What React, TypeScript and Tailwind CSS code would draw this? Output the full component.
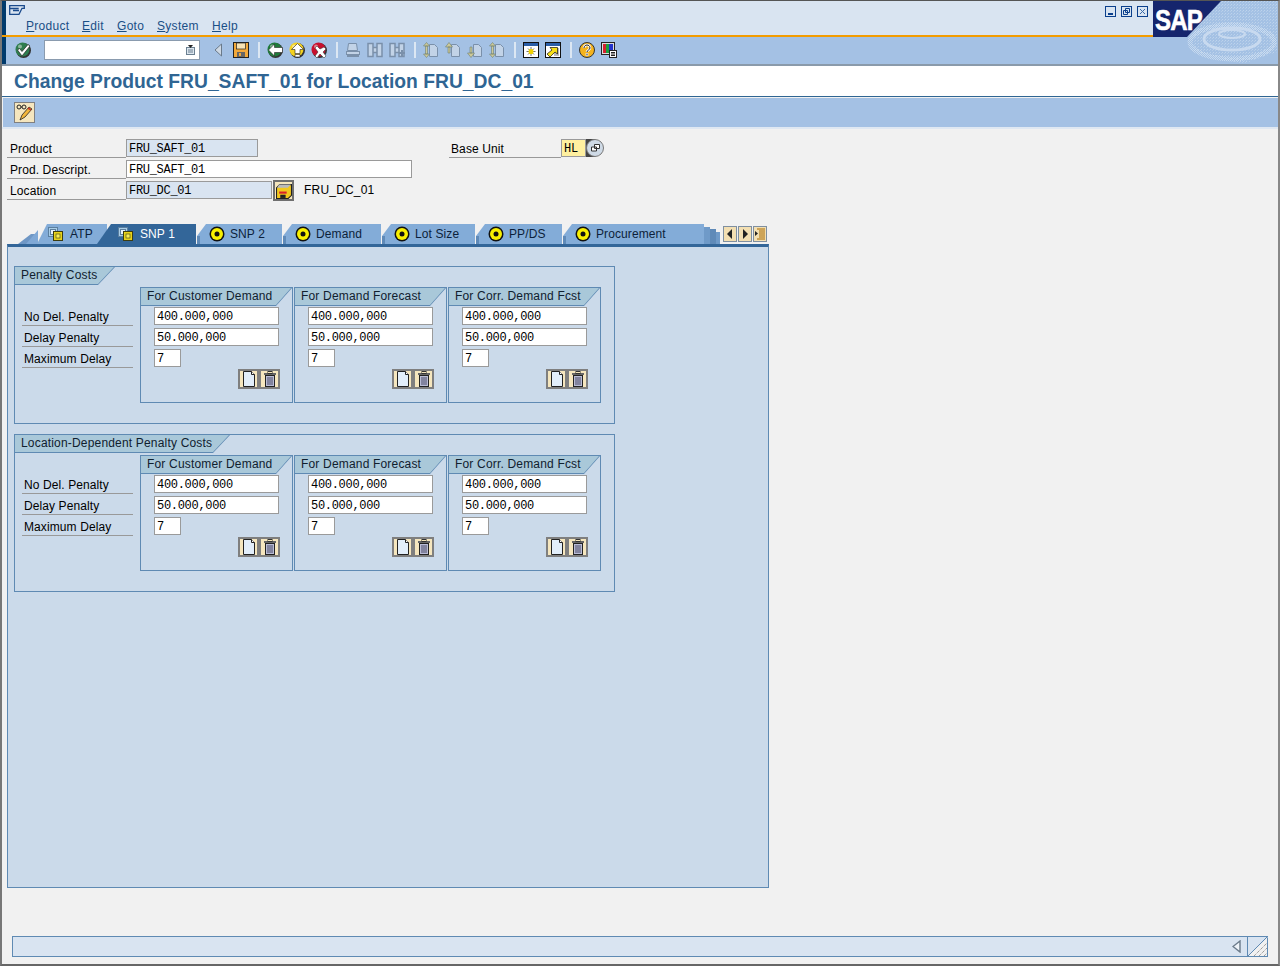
import React from "react";

const sans = "font-['Liberation_Sans',Arial,sans-serif]";
const mono = "font-['Liberation_Mono','Courier_New',monospace]";

const Round = ({ fill, children }: { fill: string; children: React.ReactNode }) => (
  <svg width="16" height="16" viewBox="0 0 16 16" className="shrink-0">
    <circle cx="8.5" cy="8.5" r="7.5" fill="#333" />
    <circle cx="7.5" cy="7.5" r="7" fill={fill} />
    <circle cx="5" cy="4.5" r="2" fill="#fff" opacity="0.45" />
    {children}
  </svg>
);

const EnterIcon = () => (
  <Round fill="#2f7d4f">
    <path d="M2.5 8l2-1.5 2.5 3 6-7 2 1.5-8 10z" fill="#fff" stroke="#222" strokeWidth="0.7" />
  </Round>
);
const BackIcon = () => (
  <Round fill="#1f7a3a">
    <path d="M1.5 8l6-6v3.5h8v5h-8V14z" fill="#fff" stroke="#222" strokeWidth="0.6" />
  </Round>
);
const ExitIcon = () => (
  <Round fill="#f4d21f">
    <path d="M8.5 1.5l6 6h-3.5v4H6v-4H2.5zM6 12.5h5v2.5H6z" fill="#fff" stroke="#222" strokeWidth="0.6" />
  </Round>
);
const CancelIcon = () => (
  <Round fill="#c8102e">
    <path d="M4 6l2-2 3 3 4-2 2 2-3 3 3 4-2 2-4-4-3 4-2-2 3-4z" fill="#fff" stroke="#222" strokeWidth="0.5" />
  </Round>
);
const SaveIcon = () => (
  <svg width="16" height="16" viewBox="0 0 16 16" className="shrink-0">
    <rect x="0.5" y="0.5" width="15" height="15" fill="#f2a93b" stroke="#222" />
    <rect x="3.5" y="1" width="9" height="6" fill="#f7e3b5" stroke="#222" strokeWidth="0.7" />
    <rect x="4" y="10" width="8" height="5" fill="#666" />
    <rect x="6" y="11" width="2" height="3" fill="#f2a93b" />
  </svg>
);
const GreyIcon = ({ kind }: { kind: string }) => {
  const c = "#7a90aa";
  const f = "#c2d3e7";
  if (kind === "print")
    return (
      <svg width="16" height="16" viewBox="0 0 16 16" className="shrink-0">
        <path d="M3.5 1.5h8l1 7h-10z" fill={f} stroke={c} />
        <rect x="1.5" y="9.5" width="13" height="3" fill={f} stroke={c} />
        <rect x="2" y="13" width="12" height="2" fill={c} />
      </svg>
    );
  if (kind === "find" || kind === "findn")
    return (
      <svg width="16" height="16" viewBox="0 0 16 16" className="shrink-0">
        <path d="M1 1.5h5v13H1zM10 1.5h5v13h-5zM6 5.5h4v5H6z" fill={f} stroke={c} strokeWidth="1.5" />
        {kind === "findn" && <path d="M10 10h2V8h2v2h2v2h-2v2h-2v-2h-2z" fill={c} />}
      </svg>
    );
  const up = kind === "first" || kind === "prev";
  const both = kind === "first" || kind === "last";
  return (
    <svg width="16" height="16" viewBox="0 0 16 16" className="shrink-0">
      <path d="M6.5 2.5h5l3 3v9h-8z" fill={f} stroke={c} />
      {both ? (
        <path d="M3.5 0.5L0.5 4h6zM3.5 15.5l3-3.5h-6zM2.5 4h2v8h-2z" fill="#cdc998" stroke="#6f7f70" strokeWidth="0.6" />
      ) : up ? (
        <path d="M4 0.5L0.5 5h7zM3 5h2v6H3z" fill="#cdc998" stroke="#6f7f70" strokeWidth="0.6" />
      ) : (
        <path d="M4 15.5L0.5 11h7zM3 5h2v6H3z" fill="#cdc998" stroke="#6f7f70" strokeWidth="0.6" />
      )}
    </svg>
  );
};
const NewSessionIcon = () => (
  <svg width="16" height="16" viewBox="0 0 16 16" className="shrink-0">
    <rect x="0.5" y="0.5" width="15" height="15" fill="#fff" stroke="#111" />
    <rect x="1" y="1" width="14" height="3" fill="#2a5ea8" />
    <path d="M8 5v9M3.5 9.5h9M5 6.5l6 6M11 6.5l-6 6" stroke="#333" strokeWidth="0.7" />
    <path d="M5.5 9.5h5M8 7v5M6 7.5l4 4M10 7.5l-4 4" stroke="#f2d200" strokeWidth="1.4" />
  </svg>
);
const ShortcutIcon = () => (
  <svg width="16" height="16" viewBox="0 0 16 16" className="shrink-0">
    <rect x="0.5" y="0.5" width="15" height="15" fill="#fff" stroke="#111" />
    <rect x="1" y="1" width="14" height="3" fill="#2a5ea8" />
    <rect x="9" y="6" width="5" height="8" fill="#bbb" />
    <path d="M2 12l5-4-2-2.5h7.5V12L10 10l-5 5z" fill="#f7e01a" stroke="#111" strokeWidth="0.7" />
  </svg>
);
const HelpIcon = () => (
  <svg width="16" height="16" viewBox="0 0 16 16" className="shrink-0">
    <circle cx="8" cy="8" r="7.5" fill="#f4b31d" stroke="#333" />
    <path d="M5 6c0-4 6-4 6 0 0 2-3 2-3 4M8 11v3" fill="none" stroke="#fff" strokeWidth="2.6" />
    <path d="M5 6c0-4 6-4 6 0 0 2-3 2-3 4M8 11.5v2" fill="none" stroke="#222" strokeWidth="1" />
  </svg>
);
const LayoutIcon = () => (
  <svg width="16" height="16" viewBox="0 0 16 16" className="shrink-0">
    <rect x="0.5" y="0.5" width="13" height="12" fill="#ddd" stroke="#222" />
    <rect x="2" y="2" width="3" height="9" fill="#d2202f" />
    <rect x="5" y="2" width="3" height="9" fill="#19a03c" />
    <rect x="8" y="2" width="4" height="9" fill="#2233cc" />
    <rect x="8.5" y="8.5" width="7" height="7" fill="#fff" stroke="#222" />
    <path d="M10 10.5h4M10 12h4M10 13.5h4" stroke="#222" />
  </svg>
);

const Sep = () => <div className="w-[2px] h-[16px] bg-[#dce7f3] ml-[9px] mr-[7px] shrink-0" />;

const WinBtn = ({ children }: { children: React.ReactNode }) => (
  <svg width="11" height="11" viewBox="0 0 11 11" className="shrink-0">
    <rect x="0.5" y="0.5" width="10" height="10" fill="none" stroke="#0b3f8c" />
    {children}
  </svg>
);

const SapLogo = () => (
  <div className="absolute left-[1151px] top-0 w-[127px] h-[63px] overflow-hidden">
    <svg width="127" height="63" viewBox="0 0 127 63" className="absolute left-0 top-0">
      <defs>
        <pattern id="dots" width="3" height="3" patternUnits="userSpaceOnUse">
          <rect x="0" y="0" width="1" height="1" fill="#d6e4f4" />
          <rect x="2" y="1" width="1" height="1" fill="#c5d8ee" />
        </pattern>
        <pattern id="dots2" width="2" height="2" patternUnits="userSpaceOnUse">
          <rect x="0" y="0" width="1" height="1" fill="#dfeaf6" />
          <rect x="1" y="1" width="1" height="1" fill="#dfeaf6" />
        </pattern>
      </defs>
      <rect x="34" y="0" width="93" height="63" fill="#a4c1e4" />
      <polygon points="68,0 127,0 127,50 90,63 40,50 40,30" fill="url(#dots)" opacity="0.5" />
      <ellipse cx="79" cy="41" rx="42" ry="17" fill="none" stroke="url(#dots2)" strokeWidth="5" opacity="0.6" />
      <ellipse cx="79" cy="38" rx="28" ry="11" fill="none" stroke="#cfdff1" strokeWidth="3" opacity="0.8" />
      <ellipse cx="79" cy="33" rx="13" ry="4" fill="none" stroke="#cfdff1" strokeWidth="2" opacity="0.8" />
      <polygon points="0,0 68,0 34,36 0,36" fill="#15256d" />
    </svg>
    <div className={`absolute left-[2px] top-[3px] origin-left scale-x-[0.8] text-[30px] leading-[32px] font-bold tracking-[-1px] text-white [-webkit-text-stroke:0.6px_white] ${sans}`}>
      SAP
    </div>
  </div>
);

const menuItems = [
  { first: "P", rest: "roduct", w: "w-[56px]" },
  { first: "E", rest: "dit", w: "w-[35px]" },
  { first: "G", rest: "oto", w: "w-[40px]" },
  { first: "S", rest: "ystem", w: "w-[55px]" },
  { first: "H", rest: "elp", w: "w-[40px]" },
];

const Field = ({ value, w, tone = "white" }: { value: string; w: string; tone?: "white" | "blue" | "yellow" }) => {
  const bg = tone === "white" ? "bg-white" : tone === "blue" ? "bg-[#d9e4f1]" : "bg-[#fff0a0]";
  return (
    <div className={`${w} h-[18px] shrink-0 border border-[#9a9a9a] ${bg} pl-[2px] text-[12px] leading-[19px] tracking-[-0.3px] text-black overflow-hidden ${mono}`}>
      {value}
    </div>
  );
};

const Label = ({ text, w, pl = "pl-[3px]" }: { text: string; w: string; pl?: string }) => (
  <div className={`${w} h-[19px] shrink-0 border-b border-[#999] ${pl} text-[12px] leading-[21px] tracking-[0.1px] text-black ${sans}`}>
    {text}
  </div>
);

const RadioIcon = () => (
  <svg width="16" height="16" viewBox="0 0 16 16" className="shrink-0">
    <circle cx="8" cy="8" r="7.5" fill="#111" />
    <circle cx="8" cy="8" r="6" fill="#f8f000" />
    <circle cx="8" cy="8" r="2.5" fill="#111" />
  </svg>
);
const PagesIcon = () => (
  <svg width="15" height="14" viewBox="0 0 15 14" className="shrink-0">
    <rect x="0.5" y="0.5" width="9" height="9" fill="#a8cde8" stroke="#5b7f9f" />
    <rect x="2.5" y="2.5" width="5" height="5" fill="#e4f0fa" stroke="#5b7f9f" />
    <rect x="5.5" y="4.5" width="9" height="9" fill="#e7d31a" stroke="#3c3c10" />
    <rect x="8" y="7" width="4" height="4" fill="#f9ef55" stroke="#3c3c10" strokeWidth="0.6" />
  </svg>
);

const tabs = [
  { text: "SNP 2", w: "w-[85px]" },
  { text: "Demand", w: "w-[98px]" },
  { text: "Lot Size", w: "w-[93px]" },
  { text: "PP/DS", w: "w-[86px]" },
  { text: "Procurement", w: "w-[141px]" },
];

const TabStrip = () => (
  <div className="flex items-end h-[20px] w-[762px]">
    <svg width="20" height="20" viewBox="0 0 20 20" className="shrink-0 ml-[11px]">
      <polygon points="0,20 13,10 18,10 10,20" fill="#6f97c5" />
      <polygon points="8,20 20,6 20,20" fill="#7fa8d6" />
    </svg>
    <div className={`w-[70px] h-[20px] shrink-0 -ml-[1px] bg-[#83acd8] [clip-path:polygon(0_100%,10px_0,100%_0,100%_100%)] flex items-center pl-[11px] gap-[7px] text-[12px] tracking-[0.1px] text-[#0c1f3a] ${sans}`}>
      <PagesIcon />
      ATP
    </div>
    <div className={`w-[99px] h-[20px] shrink-0 -ml-[10px] bg-[#336699] [clip-path:polygon(0_100%,14px_0,100%_0,100%_100%)] flex items-center pl-[21px] gap-[7px] text-[12px] tracking-[0.1px] text-white ${sans}`}>
      <PagesIcon />
      SNP 1
    </div>
    {tabs.map((t) => (
      <div
        key={t.text}
        className={`${t.w} h-[20px] shrink-0 ml-[1px] relative bg-[#83acd8] [clip-path:polygon(0_100%,0_12px,9px_0,100%_0,100%_100%)] flex items-center pl-[12px] gap-[5px] text-[12px] tracking-[0.1px] text-[#0c1f3a] ${sans}`}
      >
        <span className="absolute left-0 bottom-0 w-[3px] h-[8px] bg-[#5f8ab8]" />
        <RadioIcon />
        {t.text}
      </div>
    ))}
    <div className="flex items-end shrink-0 ml-0">
      <div className="w-[6px] h-[17px] bg-[#6f9ac8]" />
      <div className="w-[6px] h-[15px] bg-[#5f8ab8]" />
      <div className="w-[4px] h-[12px] bg-[#6f9ac8]" />
    </div>
    <div className="flex gap-[1px] ml-[3px] mb-[2px] shrink-0">
      {[0, 1, 2].map((i) => (
        <div key={i} className="w-[14px] h-[16px] border border-[#7f8fa0] bg-[#f3dfb2] flex items-center justify-center">
          <svg width="12" height="12" viewBox="0 0 12 12">
            {i === 0 && <polygon points="8,1 3,6 8,11" fill="#222" />}
            {i === 1 && <polygon points="4,1 9,6 4,11" fill="#222" />}
            {i === 2 && (
              <g>
                <path d="M3 1h8M5 3h6M5 5h6M5 7h6M5 9h6M3 11h8" stroke="#a86a00" />
                <polygon points="1,3 4,5.5 1,8" fill="#222" />
              </g>
            )}
          </svg>
        </div>
      ))}
    </div>
  </div>
);

const HeadTab = ({ text, w, slant, h }: { text: string; w: string; slant: string; h: string }) => (
  <div className={`${w} ${h} relative bg-[#5f8ab3] ${slant}`}>
    <div className={`absolute left-0 right-[1px] top-0 bottom-[1px] bg-[#a9c8d9] ${slant} pl-[6px] text-[12px] leading-[16px] tracking-[0.18px] text-[#10202e] whitespace-nowrap ${sans}`}>
      {text}
    </div>
  </div>
);

const FileIcon = () => (
  <svg width="14" height="16" viewBox="0 0 14 16">
    <path d="M1.5 0.5h8l3 3v12h-11z" fill="#e2eefa" stroke="#222" />
    <path d="M9.5 0.5v3h3" fill="#fff" stroke="#222" />
  </svg>
);
const TrashIcon = () => (
  <svg width="14" height="16" viewBox="0 0 14 16">
    <rect x="1" y="2" width="12" height="2" fill="#666" />
    <rect x="5" y="0.5" width="4" height="2" fill="none" stroke="#333" />
    <rect x="2.5" y="4.5" width="9" height="11" fill="#b9bcd6" stroke="#222" />
    <path d="M5 6v8M7 6v8M9 6v8" stroke="#4a4a66" />
  </svg>
);

const IconBtn = ({ children }: { children: React.ReactNode }) => (
  <div className="w-[21px] h-[20px] border-2 border-[#7f7f7f] bg-[#f5e6be] flex items-center justify-center shrink-0">
    {children}
  </div>
);

const SubGroup = ({ title }: { title: string }) => (
  <div className="w-[153px] h-[116px] shrink-0 border border-[#5f8ab3] flex flex-col">
    <HeadTab text={title} w="w-[151px]" h="h-[18px]" slant="[clip-path:polygon(0_0,100%_0,135px_100%,0_100%)]" />
    <div className="flex flex-col gap-[3px] pl-[13px] pt-[1px]">
      <Field value="400.000,000" w="w-[125px]" />
      <Field value="50.000,000" w="w-[125px]" />
      <Field value="7" w="w-[27px]" />
    </div>
    <div className="flex justify-end pr-[12px] mt-[2px]">
      <IconBtn>
        <FileIcon />
      </IconBtn>
      <IconBtn>
        <TrashIcon />
      </IconBtn>
    </div>
  </div>
);

const PenaltyGroup = ({ title, headW, slant }: { title: string; headW: string; slant: string }) => (
  <div className="w-[601px] h-[158px] border border-[#5f8ab3]">
    <HeadTab text={title} w={headW} h="h-[18px]" slant={slant} />
    <div className="flex mt-[2px] pl-[7px]">
      <div className="w-[111px] mr-[7px] pt-[20px] flex flex-col gap-[2px] shrink-0">
        {["No Del. Penalty", "Delay Penalty", "Maximum Delay"].map((l) => (
          <Label key={l} text={l} w="w-[111px]" pl="pl-[2px]" />
        ))}
      </div>
      <div className="flex gap-[1px]">
        <SubGroup title="For Customer Demand" />
        <SubGroup title="For Demand Forecast" />
        <SubGroup title="For Corr. Demand Fcst" />
      </div>
    </div>
  </div>
);

export default function App() {
  return (
    <div className="relative w-[1280px] h-[966px] overflow-hidden bg-[#f1f1f1] flex flex-col border-l-2 border-t border-r-2 border-b-2 border-l-[#777] border-t-[#555] border-r-[#888] border-b-[#666]">
      {/* title bar */}
      <div className="h-[36px] shrink-0 flex bg-[#d9e4f1] border-b-2 border-[#f39c00]">
        <div className="w-[4px] bg-[#003a6c] shrink-0" />
        <div className="flex-1 relative">
          <div className="pl-[3px] pt-[4px] h-[17px]">
            <svg width="16" height="12" viewBox="0 0 16 12">
              <path d="M0.7 0.7h14.6v2.6H13l-3 6H0.7zM0.7 3.5h9M4 5.5h6" fill="none" stroke="#1a4a8c" strokeWidth="1.3" />
            </svg>
          </div>
          <div className={`flex pl-[20px] text-[12px] leading-[16px] tracking-[0.3px] text-[#1a4f86] ${sans}`}>
            {menuItems.map((m) => (
              <div key={m.first} className={m.w}>
                <u>{m.first}</u>
                {m.rest}
              </div>
            ))}
          </div>
          <div className="absolute right-[130px] top-[5px] flex gap-[5px]">
            <WinBtn>
              <rect x="3" y="7" width="5" height="2" fill="#0b3f8c" />
            </WinBtn>
            <WinBtn>
              <path d="M4.5 2.5h4v4h-4zM2.5 4.5h4v4h-4z" fill="#d9e4f1" stroke="#0b3f8c" />
            </WinBtn>
            <WinBtn>
              <path d="M3 3l5 5M8 3l-5 5" stroke="#3a6aa8" />
            </WinBtn>
          </div>
        </div>
      </div>

      {/* system toolbar */}
      <div className="h-[29px] shrink-0 flex bg-[#a4c1e4] border-b-2 border-[#8a9aaa]">
        <div className="w-[4px] bg-[#003a6c] shrink-0" />
        <div className="flex items-center pl-[9px] pb-[1px]">
          <EnterIcon />
          <div className="ml-[13px] w-[156px] h-[20px] border border-[#8a9bae] bg-white flex items-center justify-end pr-[4px] shrink-0">
            <svg width="9" height="10" viewBox="0 0 9 10">
              <rect x="0.5" y="2.5" width="8" height="7" fill="#dde6ee" stroke="#6a7f90" />
              <path d="M2 5h5M2 7h5" stroke="#6a7f90" />
              <polygon points="2,0 7,0 4.5,3" fill="#222" />
            </svg>
          </div>
          <svg width="8" height="14" viewBox="0 0 8 14" className="ml-[14px] shrink-0">
            <polygon points="7.5,1 1,7 7.5,13" fill="#cdd8e4" stroke="#6a7a8a" />
          </svg>
          <div className="ml-[11px]">
            <SaveIcon />
          </div>
          <Sep />
          <div className="flex gap-[6px]">
            <BackIcon />
            <ExitIcon />
            <CancelIcon />
          </div>
          <Sep />
          <div className="flex gap-[6px]">
            <GreyIcon kind="print" />
            <GreyIcon kind="find" />
            <GreyIcon kind="findn" />
          </div>
          <Sep />
          <div className="flex gap-[6px]">
            <GreyIcon kind="first" />
            <GreyIcon kind="prev" />
            <GreyIcon kind="next" />
            <GreyIcon kind="last" />
          </div>
          <Sep />
          <div className="flex gap-[6px]">
            <NewSessionIcon />
            <ShortcutIcon />
          </div>
          <Sep />
          <div className="flex gap-[6px]">
            <HelpIcon />
            <LayoutIcon />
          </div>
        </div>
      </div>

      {/* screen title */}
      <div className={`h-[31px] shrink-0 bg-white border-b border-[#2f6593] pl-[12px] pt-[2px] text-[19.3px] leading-[28px] font-bold text-[#2f6593] ${sans}`}>
        Change Product FRU_SAFT_01 for Location FRU_DC_01
      </div>

      {/* application toolbar */}
      <div className="shrink-0 pt-[1px] pl-[1px] bg-[#f1f1f1] border-b-2 border-[#dfe8f2]">
        <div className="h-[29px] bg-[#a4c1e4] pl-[11px] pt-[4px]">
          <div className="w-[21px] h-[21px] border border-[#808080] bg-[#f5e6be] flex items-center justify-center">
            <svg width="17" height="17" viewBox="0 0 17 17">
              <path d="M4 16l2-5 7-8 3 2-7 8z" fill="#f2b63c" stroke="#222" strokeWidth="0.8" />
              <path d="M12 4l3 2" stroke="#c83a2a" strokeWidth="1.6" />
              <circle cx="3" cy="3" r="2" fill="none" stroke="#222" />
              <circle cx="8" cy="3" r="2" fill="none" stroke="#222" />
              <path d="M5 3h1" stroke="#222" />
            </svg>
          </div>
        </div>
      </div>

      {/* main area */}
      <div className="flex-1 pl-[5px] pt-[10px]">
        <div className="flex">
          <div className="w-[442px] shrink-0 flex flex-col gap-[2px]">
            <div className="flex">
              <Label text="Product" w="w-[119px]" />
              <Field value="FRU_SAFT_01" w="w-[132px]" tone="blue" />
            </div>
            <div className="flex">
              <Label text="Prod. Descript." w="w-[119px]" />
              <Field value="FRU_SAFT_01" w="w-[286px]" />
            </div>
            <div className="flex">
              <Label text="Location" w="w-[119px]" />
              <Field value="FRU_DC_01" w="w-[146px]" tone="blue" />
              <div className="ml-[1px] -mt-[1px] w-[21px] h-[21px] border-2 border-[#6f6f6f] bg-[#f5e6be] flex items-center justify-center shrink-0">
                <svg width="16" height="16" viewBox="0 0 15 15">
                  <path d="M0.5 4.5l3-3h11v10l-3 3h-11z" fill="#f2c81e" stroke="#222" />
                  <path d="M3 1.5h11l-3 3H1z" fill="#bbb" />
                  <rect x="3" y="8" width="7" height="2" fill="#d8232a" />
                  <rect x="4" y="11" width="5" height="3" fill="#222" />
                </svg>
              </div>
              <div className={`ml-[10px] text-[12px] leading-[19px] tracking-[0.2px] text-black ${sans}`}>FRU_DC_01</div>
            </div>
          </div>
          <div className="flex">
            <Label text="Base Unit" w="w-[112px]" pl="pl-[2px]" />
            <Field value="HL" w="w-[25px]" tone="yellow" />
            <svg width="18" height="18" viewBox="0 0 18 18" className="shrink-0">
              <rect x="0" y="0" width="9" height="18" fill="#444" />
              <circle cx="9" cy="9" r="8.5" fill="#cfdae6" stroke="#777" />
              <path d="M8.5 5.5h5v4h-5zM5.5 8h5v4h-5z" fill="#fff" stroke="#333" />
            </svg>
          </div>
        </div>

        <div className="mt-[23px]">
          <TabStrip />
          <div className="w-[762px] h-[644px] border border-[#5f8ab3] border-t-[3px] border-t-[#336699] bg-[#cbdaea] pl-[6px] pt-[19px] flex flex-col gap-[10px]">
            <PenaltyGroup title="Penalty Costs" headW="w-[100px]" slant="[clip-path:polygon(0_0,100%_0,83px_100%,0_100%)]" />
            <PenaltyGroup title="Location-Dependent Penalty Costs" headW="w-[215px]" slant="[clip-path:polygon(0_0,100%_0,198px_100%,0_100%)]" />
          </div>
        </div>
      </div>

      {/* status bar */}
      <div className="shrink-0 ml-[10px] mb-[7px] w-[1256px] h-[21px] border border-[#5f8ab3] bg-[#d9e4f1] flex justify-end">
        <div className="flex items-center pr-[6px]">
          <svg width="9" height="13" viewBox="0 0 9 13">
            <polygon points="8,1 1,6.5 8,12" fill="#eef3f9" stroke="#6a7a8a" strokeWidth="1.4" />
          </svg>
        </div>
        <div className="w-[20px] h-full border-l border-[#5f8ab3] bg-[#f1f1f1]">
          <svg width="20" height="19" viewBox="0 0 20 19">
            <polygon points="0,19 0,0 20,0" fill="#d9e4f1" />
            <path d="M0 19L19 0" stroke="#5f8ab3" />
            <path d="M6 19L19 6M11 19l8-8M16 19l3-3" stroke="#777" strokeDasharray="1 1" />
          </svg>
        </div>
      </div>

      <SapLogo />
    </div>
  );
}
